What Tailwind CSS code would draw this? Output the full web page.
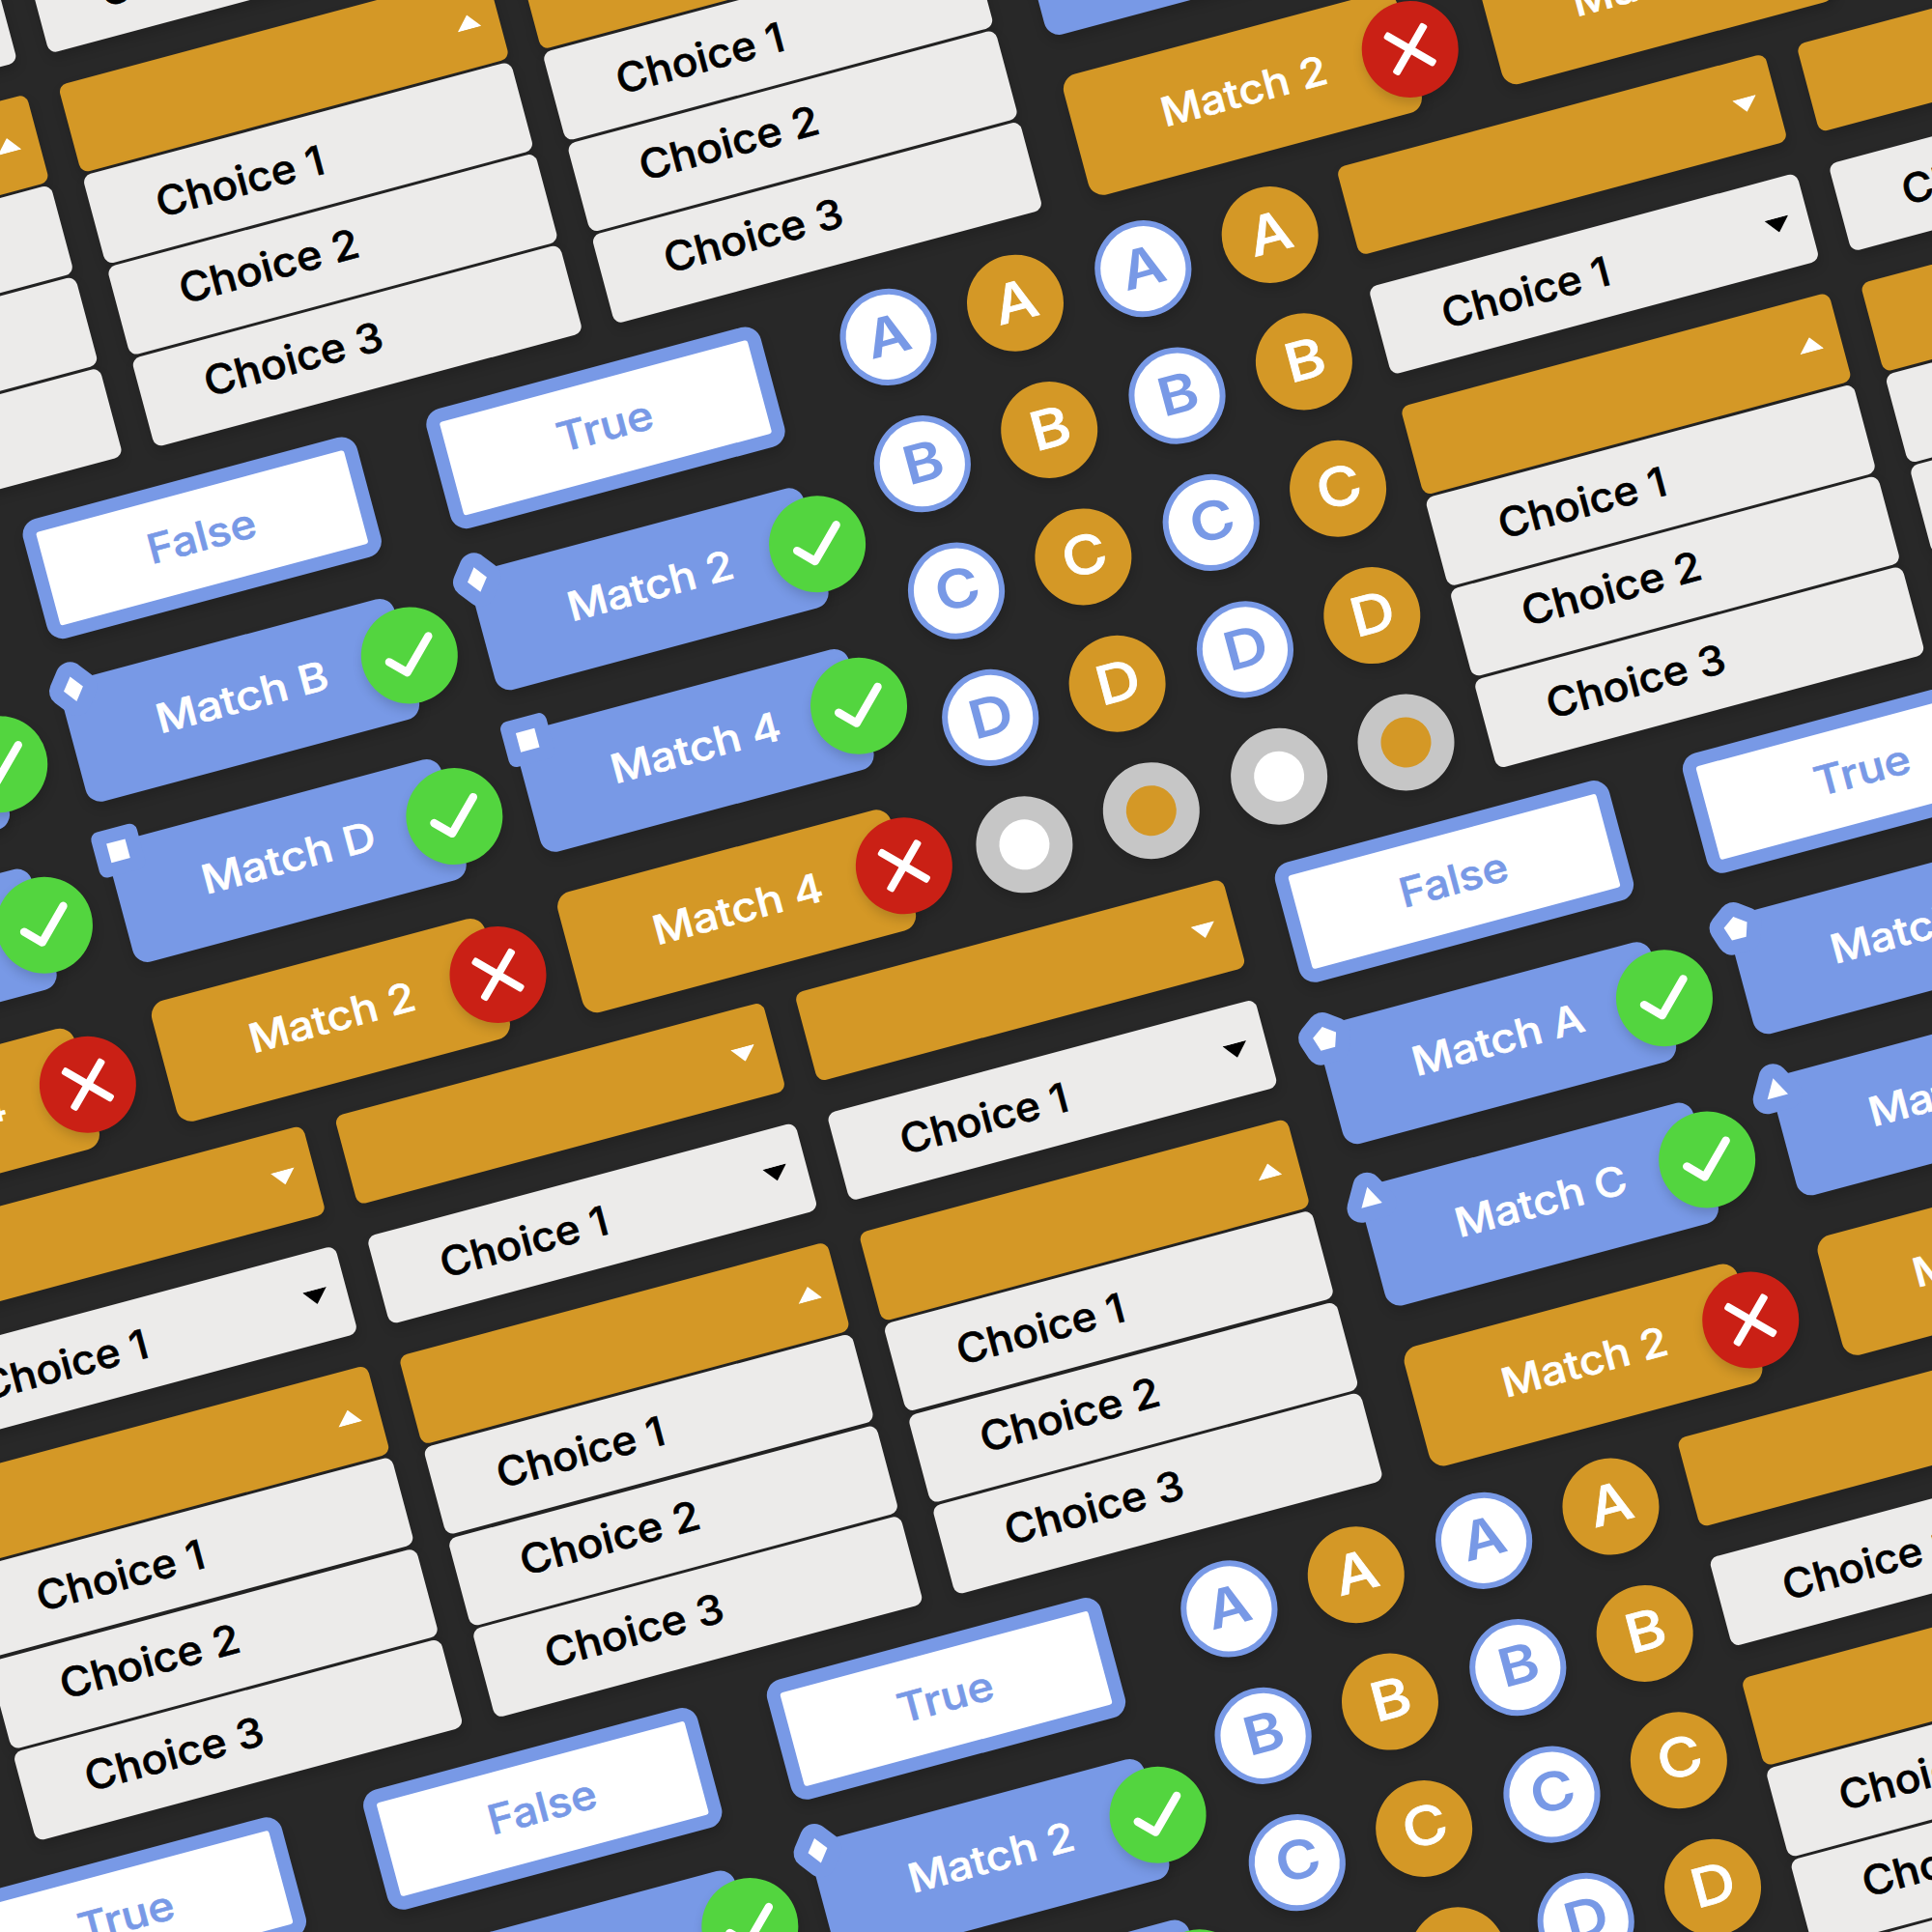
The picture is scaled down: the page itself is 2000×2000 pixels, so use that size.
<!DOCTYPE html>
<html lang="en">
<head>
<meta charset="utf-8">
<title>Quiz components</title>
<script src="https://cdn.jsdelivr.net/npm/@tailwindcss/browser@4"></script>
</head>
<body class="bg-[#282828]">
<main class="relative h-[2000px] w-[2000px] overflow-hidden bg-[#282828] font-['Inter',sans-serif]">
  <div id="wall" class="flex w-[2820px] origin-top-left flex-col [transform:rotate(-15deg)_translate(-567px,-156px)]"></div>
</main>
<script>
  // Horizontal stretch of each label
  const stretch = {
    'Choice 1': 1.053, 'Choice 2': 1.073, 'Choice 3': 1.066,
    'Match 1': 1.1, 'Match 2': 1.097, 'Match 3': 1.1, 'Match 4': 1.112,
    'Match A': 1.109, 'Match B': 1.125, 'Match C': 1.102, 'Match D': 1.118,
    'True': 1.11, 'False': 1.087
  };

  const label = (text, cls, dx, dy) =>
    `<span class="inline-block whitespace-pre leading-none font-medium [-webkit-text-stroke:0.6px_currentColor] ${cls}" style="transform:translate(${dx}px,${dy}px) scaleX(${stretch[text]})">${text}</span>`;

  const arrow = (up, color) => `
    <svg class="h-[15px] w-[25.5px] ${color}" viewBox="0 0 25.5 15" fill="currentColor">
      <path d="${up ? 'M0 15H25.5L13.6 0Z' : 'M0 0H25.5L12 15Z'}"/>
    </svg>`;

  const bar = (color, content, justify) => `
    <div class="flex h-[94.6px] w-[458.5px] shrink-0 items-center rounded-[9px] shadow-[0_6px_12px_rgba(0,0,0,0.16)] ${color} ${justify}">${content}</div>`;

  const choice = (n, dy) => label('Choice ' + n, 'origin-left text-[42px] text-black', 0, dy);

  const dropdown = () => `
    <div class="flex shrink-0 flex-col gap-[33.7px]">
      ${bar('bg-[#d49826]', arrow(false, 'text-white'), 'justify-end pr-[19.5px]')}
      ${bar('bg-[#ecebea]', choice(1, 0) + arrow(false, 'text-black'), 'justify-between pl-[66.5px] pr-[19.5px]')}
      <div class="flex flex-col gap-[3.2px]">
        ${bar('bg-[#d49826]', arrow(true, 'text-white'), 'justify-end pr-[19.5px]')}
        ${bar('bg-[#ecebea]', choice(1, -0.5), 'pl-[66.5px]')}
        ${bar('bg-[#ecebea]', choice(2, -4.8), 'pl-[66.5px]')}
        ${bar('bg-[#ecebea]', choice(3, -3.5), 'pl-[66.5px]')}
      </div>
    </div>`;

  const tags = {
    diamond: '<path d="M44.3 25.3L54.6 38.5L44.3 51.7L34 38.5Z" stroke="#7899e6" stroke-width="30" stroke-linejoin="round" fill="#7899e6"/><path d="M44.3 25.3L54.6 38.5L44.3 51.7L34 38.5Z" fill="#fff"/>',
    square: '<rect x="17.8" y="15.1" width="49" height="48.4" rx="8" fill="#7899e6"/><rect x="32.3" y="29.3" width="20" height="20.4" fill="#fff"/>',
    pentagon: '<path d="M38.5 31L50.9 40L46.1 54.5H30.9L26.1 40Z" stroke="#7899e6" stroke-width="30" stroke-linejoin="round" fill="#7899e6"/><path d="M38.5 31L50.9 40L46.1 54.5H30.9L26.1 40Z" fill="#fff"/>',
    triangle: '<path d="M41.5 31.2L52.3 51H30.2Z" stroke="#7899e6" stroke-width="30" stroke-linejoin="round" fill="#7899e6"/><path d="M41.5 31.2L52.3 51H30.2Z" fill="#fff"/>'
  };
  const tag = (name, dx) => name ? `<svg class="absolute -top-[30px] -left-[30px] h-20 w-20" viewBox="0 0 80 80" style="translate:${dx}px 0px">${tags[name]}</svg>` : '';

  const badge = (ok, dx) => `
    <div class="absolute top-[14.2px] -right-[50px] size-[100px] rounded-full shadow-[0_6px_12px_rgba(0,0,0,0.16)] ${ok ? 'bg-[#53d53f]' : 'bg-[#ca2015]'}" style="translate:${dx}px 0px">
      <svg class="size-full" viewBox="-50 -50 100 100">
        ${ok ? '<path d="M-22 1.3L-6.8 16.6L24 -14.2" fill="none" stroke="#fff" stroke-width="8.4" stroke-linecap="round" stroke-linejoin="round"/>'
             : '<g fill="#fff" transform="rotate(45)"><rect x="-30" y="-4" width="60" height="8" rx="2.5"/><rect x="-4" y="-30" width="8" height="60" rx="2.5"/></g>'}
      </svg>
    </div>`;

  const row = (inner) => `<div class="h-[172.8px] shrink-0">${inner}</div>`;

  const answer = (text, dx, dy) => row(`
    <div class="flex h-[128.2px] w-[358.5px] items-center justify-center rounded-[17px] border-[14px] border-[#7899e6] bg-[#7899e6] shadow-[0_6px_12px_rgba(0,0,0,0.16)]" style="margin-left:${dx}px;margin-top:${dy}px">
      <div class="flex size-full shrink-0 items-center justify-center rounded-[3px] bg-white">${label(text, 'text-[42px] text-[#7899e6]', 0, -2)}</div>
    </div>`);

  const match = (text, shape, dx, dy, bx, tx = 0) => row(`
    <div class="relative flex h-[128.6px] w-[357px] items-center justify-center rounded-2xl shadow-[0_6px_12px_rgba(0,0,0,0.16)] ${shape ? 'bg-[#7899e6]' : 'bg-[#d49826]'}" style="margin-left:${dx}px;margin-top:${dy}px">
      ${tag(shape, tx)}${label(text, 'text-[41.5px] text-white', 2, shape ? -2.3 : -1.8)}${badge(!!shape, bx)}
    </div>`);

  const column = (...rows) => `<div class="flex w-[357px] shrink-0 flex-col">${rows.join('')}</div>`;

  const circle = (letter, blue) => `
    <div class="flex size-[100px] items-center justify-center rounded-full shadow-[0_6px_12px_rgba(0,0,0,0.16)] ${blue ? 'border-[6px] border-[#7899e6] bg-white text-[#7899e6] font-semibold' : 'bg-[#d49826] text-white font-medium [-webkit-text-stroke:0.8px_currentColor]'}">
      <span class="inline-block text-[55px] leading-none" style="transform:translate(${letter === 'A' ? 0 : 1.2}px,-2px) scaleX(1.14)">${letter}</span>
    </div>`;
  const radio = (blue) => `
    <div class="flex size-[100px] items-center justify-center rounded-full bg-[#c6c6c6] shadow-[0_6px_12px_rgba(0,0,0,0.16)]">
      <div class="size-[52px] rounded-full ${blue ? 'bg-white' : 'bg-[#d49826]'}"></div>
    </div>`;
  const circles = () => `
    <div class="grid shrink-0 grid-cols-[repeat(4,100px)] gap-x-[36.5px] gap-y-[36px]">
      ${['A', 'B', 'C', 'D'].map(l => [1, 0, 1, 0].map(b => circle(l, b)).join('')).join('')}
      ${[1, 0, 1, 0].map(radio).join('')}
    </div>`;

  const bandA = () => `
    <section class="flex h-[681.2px] shrink-0 items-start pl-[109.9px]">
      <div class="flex gap-[34.1px]">${dropdown()}${dropdown()}${dropdown()}</div>
      <div class="flex gap-[83.5px] pl-[52.4px]">
        ${column(answer('False', 0, 0.8), match('Match A', 'pentagon', 0, 0.4, 0.8, -0.5), match('Match C', 'triangle', -1, 0.5, 1.2, -0.5), match('Match 2', '', 0, 0, 0.8))}
        ${column(answer('True', -3, 0.8), match('Match 1', 'pentagon', 0, 0.4, 1), match('Match 3', 'triangle', 0, 0.5, 1, -6.5), match('Match 4', '', 2.6, 0, 1))}
      </div>
    </section>`;

  const bandB = () => `
    <section class="flex h-[681.2px] shrink-0 items-start pl-[3px]">
      <div class="flex">
        ${column(answer('True', -3, 0.6), match('Match A', 'pentagon', -0.6, 2, 2.5), match('Match C', 'triangle', 2.5, 2.4, 0.5), match('Match 4', '', 2.5, 0.5, 1.2))}
        <div class="pl-[85px]">${column(answer('False', 0.5, 2.4), match('Match B', 'diamond', -3.8, 2.4, 2.8, 0.5), match('Match D', 'square', 0.4, 2.6, 0.6), match('Match 2', '', 0.7, 0.6, 0.8))}</div>
        <div class="pl-[78px]">${column(answer('True', -1.3, 0.4), match('Match 2', 'diamond', -0.5, 0.6, 1.5, -5.5), match('Match 4', 'square', 2, 1.3, -2.4, 2), match('Match 4', '', 1, 0.6, 1))}</div>
      </div>
      <div class="pl-[77.8px]">${circles()}</div>
      <div class="flex gap-[34.1px] pt-[0.4px] pl-[34.2px]">${dropdown()}${dropdown()}</div>
    </section>`;

  document.getElementById('wall').innerHTML = bandA() + bandB() + bandA() + bandB();
</script>
</body>
</html>
